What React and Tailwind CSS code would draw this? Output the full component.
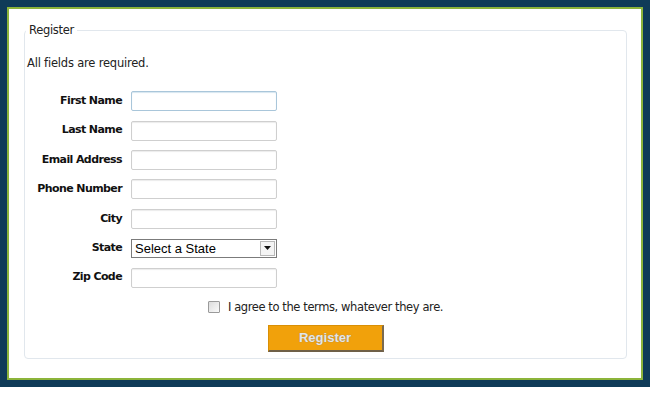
export default function App() {
  const fields = ['First Name', 'Last Name', 'Email Address', 'Phone Number', 'City', 'State', 'Zip Code'];

  return (
    <div className="w-[652px] h-[405px] bg-white">
      <div className="w-[650px] h-[387px] bg-[#0f3b58] p-[7px]">
        <div className="h-full border-[2px] border-[#8cb43a] bg-white pl-[15px] pr-[14px] pt-[14px] font-['DejaVu_Sans',sans-serif] text-[11px] text-[#222]">
          <fieldset className="h-[336px] border border-[#e1e7ed] rounded-[4px] px-[1px]">
            <legend className="px-[3px] ml-0 text-[11.5px] text-[#222] leading-[14px] tracking-[-0.3px]">Register</legend>
            <p className="mt-[18px] ml-[1px] text-[11.5px] tracking-[-0.2px]">All fields are required.</p>

            <div className="mt-[19px] flex flex-col gap-[9.4px]">
              {fields.map((f, i) => (
                <div key={f} className="flex items-center h-[20px]">
                  <label className="w-[96px] text-right font-bold text-[11px] text-[#111] tracking-[-0.6px]">{f}</label>
                  {f === 'State' ? (
                    <div className="ml-[9px] w-[146px] h-[19px] border border-[#7b7b7b] flex items-center bg-white">
                      <span className="pl-[3px] flex-1 font-['Liberation_Sans',sans-serif] text-[13px] text-black leading-none">Select a State</span>
                      <span className="w-[15px] h-[15px] mr-[1px] border border-[#b8b8b8] bg-[#f4f4f4] flex items-center justify-center">
                        <svg width="7" height="4" viewBox="0 0 7 4"><path d="M0 0h7L3.5 4z" fill="#111" /></svg>
                      </span>
                    </div>
                  ) : (
                    <input
                      type="text"
                      className={`ml-[9px] w-[146px] h-[20px] rounded-[2px] bg-white outline-none border ${i === 0 ? 'border-[#a9c6da] shadow-[inset_0_1px_1px_#d6e6f0]' : 'border-[#cfcfcf] shadow-[inset_0_1px_1px_#ececec]'}`}
                    />
                  )}
                </div>
              ))}
            </div>

            <div className="mt-[11px] flex items-center justify-center">
              <span className="w-[12px] h-[12px] border border-[#9a9a9a] bg-gradient-to-br from-[#dcdcdc] to-[#fafafa] rounded-[1px]"></span>
              <span className="ml-[8px] text-[11.5px] text-[#222] tracking-[-0.4px]">I agree to the terms, whatever they are.</span>
            </div>

            <div className="mt-[9px] flex justify-center">
              <button className="w-[116px] h-[27px] bg-[#f1a10b] border border-[#d98f05] border-r-[#7a6a50] border-b-[#6f6048] border-r-2 border-b-2 font-['Liberation_Sans',sans-serif] font-bold text-[13px] text-[#e6e6e6] [text-shadow:0_0_1px_#8a7a60]">
                Register
              </button>
            </div>
          </fieldset>
        </div>
      </div>
    </div>
  );
}
